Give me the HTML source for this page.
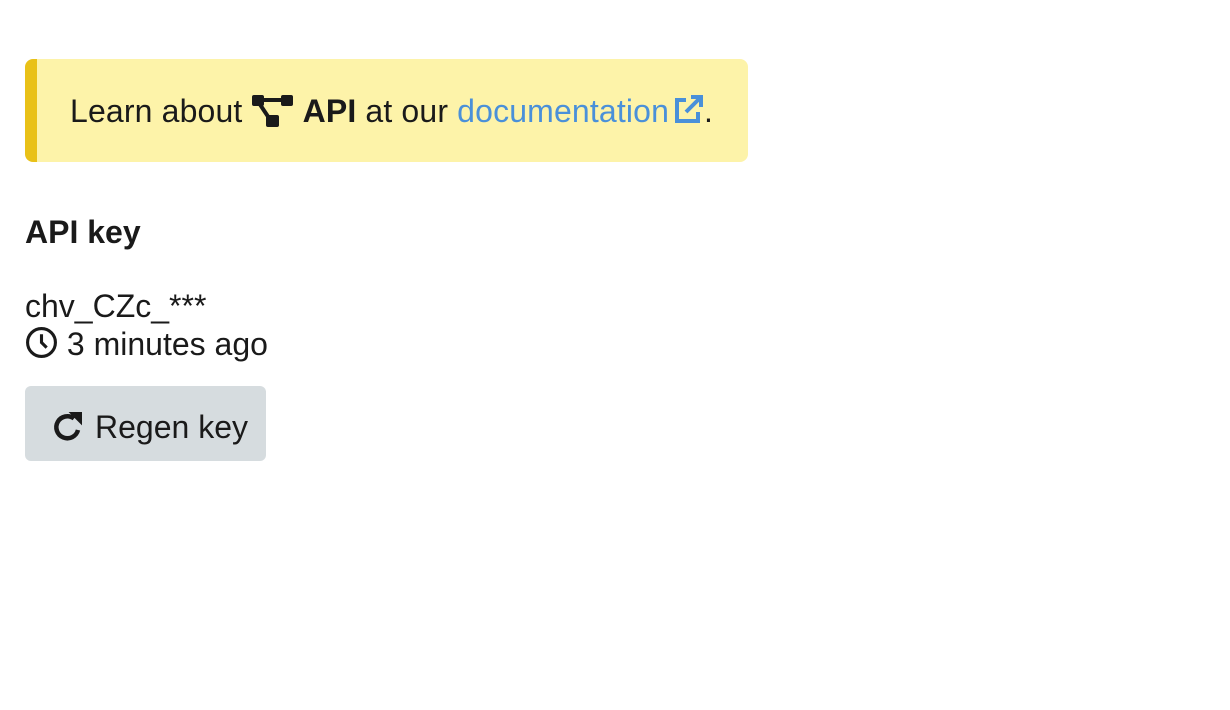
<!DOCTYPE html>
<html><head><meta charset="utf-8"><style>
body{margin:0;background:#fff;font-family:"Liberation Sans",sans-serif;color:#1a1a1a;font-size:32px;line-height:38px}
.box{position:absolute;left:25px;top:59px;width:711px;height:103px;background:#fdf3a9;border-left:12px solid #e9c118;border-radius:8px}
.box .t{position:absolute;left:33px;top:33px;white-space:nowrap;letter-spacing:0.15px}
a{color:#4a90d9;text-decoration:none}
h2{position:absolute;left:25px;top:213px;margin:0;font-size:32px;font-weight:bold}
.k{position:absolute;left:25px;top:287px}
.m{position:absolute;left:25px;top:325px}
.btn{position:absolute;left:25px;top:386px;width:241px;height:75px;background:#d6dcdf;border-radius:6px}
.btn span{position:absolute;left:70px;top:22px}
svg{vertical-align:middle}
</style></head><body>
<div class="box"><div class="t">Learn about <svg width="42" height="34" viewBox="0 0 42 34" style="vertical-align:-5px"><rect x="0" y="2" width="12" height="11" rx="2" fill="#1a1a1a"/><rect x="29" y="2" width="12" height="11" rx="2" fill="#1a1a1a"/><rect x="14" y="22" width="13" height="12" rx="2" fill="#1a1a1a"/><path d="M8 7H32M7 10L17 25" stroke="#1a1a1a" stroke-width="4"/></svg> <b>API</b> at our <a>documentation<svg width="32" height="32" viewBox="0 0 32 32" style="vertical-align:-3px;margin-left:3px"><path d="M14 7H5V28H26V19" fill="none" stroke="#4a90d9" stroke-width="4"/><path d="M14 19L28 5M19 4H29V14" fill="none" stroke="#4a90d9" stroke-width="4"/></svg></a>.</div></div>
<h2>API key</h2>
<div class="k">chv_CZc_***</div>
<div class="m"><svg width="33" height="33" viewBox="0 0 32 32" style="vertical-align:-4px"><circle cx="16" cy="16" r="13.5" fill="none" stroke="#1a1a1a" stroke-width="3"/><path d="M16 8V16L21 21" fill="none" stroke="#1a1a1a" stroke-width="3"/></svg> 3 minutes ago</div>
<div class="btn"><svg width="32" height="32" viewBox="0 0 32 32" style="position:absolute;left:27px;top:25px"><path d="M26 19A11 11 0 1 1 22 7.5" fill="none" stroke="#1a1a1a" stroke-width="4.5"/><path d="M19 2H29V12Z" fill="#1a1a1a" stroke="#1a1a1a" stroke-width="2"/></svg><span>Regen key</span></div>
</body></html>
